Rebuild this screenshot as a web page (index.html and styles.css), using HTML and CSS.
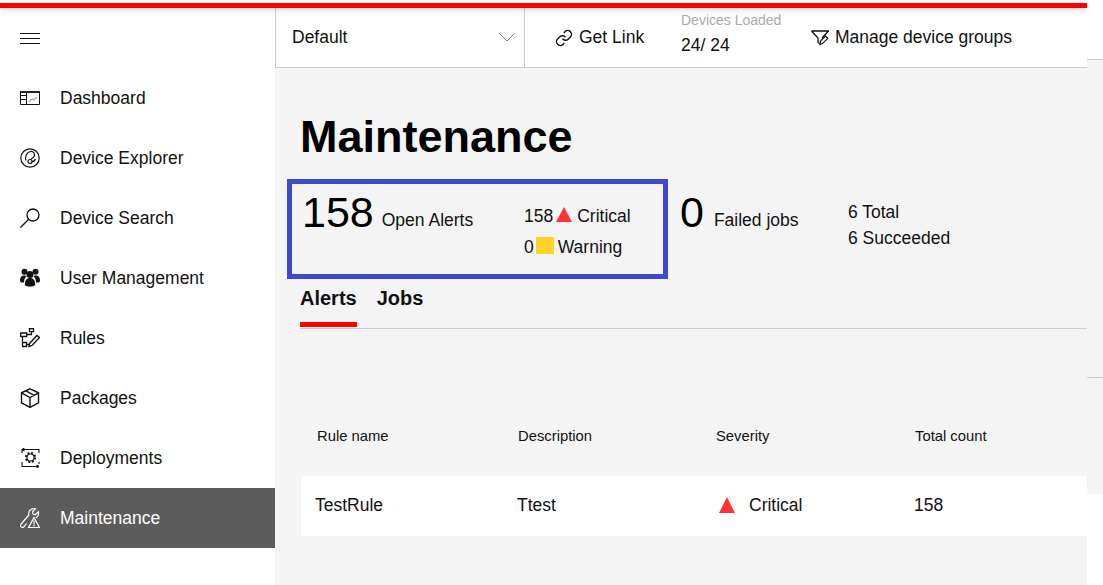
FILE: index.html
```html
<!DOCTYPE html>
<html>
<head>
    <title>Maintenance</title>
    <link rel="stylesheet" href="styles.css">
</head>
<body>
    <div class="redbar"></div>
    <div class="layout">
        <div class="sidebar">
            <div class="menu-btn">
                <svg width="20" height="12" viewBox="0 0 20 12"><path d="M0 1.5h20M0 6.5h20M0 11.5h20" stroke="#111" fill="none"/></svg>
            </div>
            <div class="nav-item">
                <svg class="nav-icon" viewBox="0 0 20 20"><path d="M.5 3.500h19v13H.5zM.5 7.500h6M6.500 5v11.500M.5 11.500h6" fill="none" stroke="#111"/><path d="M0 3h20v2H0z" fill="#222"/><path d="M9 14l3-3 2 1 3-3" fill="none" stroke="#aab" stroke-width="1.200"/></svg>
                <span>Dashboard</span>
            </div>
            <div class="nav-item">
                <svg class="nav-icon" viewBox="0 0 20 20"><g fill="none" stroke="#111" stroke-width="1.200"><circle cx="10" cy="10" r="9.200"/><path d="M6 12.500C4.500 8.500 7 4 10.500 3.500c3-.4 5 2.500 3.500 5-.8 1.300-2.200 1.800-3 2.800"/><circle cx="10" cy="13.500" r="2"/><path d="M12 13.500c1.500 0 3-1 3.500-2.500"/></g></svg>
                <span>Device Explorer</span>
            </div>
            <div class="nav-item">
                <svg class="nav-icon" viewBox="0 0 20 20"><circle cx="13" cy="7" r="6" fill="none" stroke="#111" stroke-width="1.300"/><path d="M8.700 11.300L.4 19.600" stroke="#111" stroke-width="1.300"/></svg>
                <span>Device Search</span>
            </div>
            <div class="nav-item">
                <svg class="nav-icon" viewBox="0 0 20 20"><g fill="#111"><circle cx="4.500" cy="3.800" r="3"/><circle cx="15.500" cy="3.800" r="3"/><circle cx="10" cy="6.500" r="3.500"/><path d="M0 13c0-4 1.500-5.500 4.500-5.500 1 0 1.500.2 2 .5C5 9.500 4 11.500 4 14.500H1zM20 13c0-4-1.500-5.500-4.500-5.500-1 0-1.500.2-2 .5 1.500 1.500 2.500 3.500 2.500 6.500h3z"/><path d="M4.800 17c0-5 2-7 5.200-7s5.200 2 5.200 7c-2 2-8.400 2-10.400 0z"/></g></svg>
                <span>User Management</span>
            </div>
            <div class="nav-item">
                <svg class="nav-icon" viewBox="0 0 20 20"><path d="M9.500.7h4v3h-4zM.7 5h6v3.500h-6zM2.500 8.500v5M2.500 14.500h4v4h-4zM6.700 6.500h4.800V3.700M6.500 16.500h3" fill="none" stroke="#111" stroke-width="1.300"/><path d="M9.500 15.500l7.500-8 2.500 2-7.500 8-3 1z" fill="none" stroke="#111" stroke-width="1.400"/></svg>
                <span>Rules</span>
            </div>
            <div class="nav-item">
                <svg class="nav-icon" viewBox="0 0 20 20"><path d="M10 .8l8.500 4v10L10 19.400l-8.500-4.600v-10zM1.500 4.800L10 9.500l8.500-4.700M10 9.500v9.900M5.800 2.800L14.200 7.300" fill="none" stroke="#111" stroke-width="1.400"/></svg>
                <span>Packages</span>
            </div>
            <div class="nav-item">
                <svg class="nav-icon" viewBox="0 0 20 20"><circle cx="10.500" cy="9.500" r="4.700" fill="none" stroke="#111" stroke-width="1.800" stroke-dasharray="2 1.700"/><circle cx="10.500" cy="9.500" r="3.500" fill="none" stroke="#111" stroke-width="1.100"/><path d="M2 5V1.500h17V5M2 14v4.500h17M2 1.500l2.500-1.500M2 1.500L4.500 3M19 18.500l-2.500-1.500M19 18.500L16.500 20M19 14v2" fill="none" stroke="#111" stroke-width="1.100"/></svg>
                <span>Deployments</span>
            </div>
            <div class="nav-item active">
                <svg class="nav-icon" viewBox="0 0 20 20"><path d="M.8 16.500L8.800 7C8 3.500 10.500.5 14.500.5l1 .3-3 3 .6 2.200 2.200.7 3-3c.6 2.500-.5 5-2.500 6M6.500 15.500l-2.800 3.500c-1.300 1.300-4 -.6-2.900-2.500" fill="none" stroke="#fff" stroke-width="1.200"/><path d="M14 9.500l5.500 10h-11z" fill="none" stroke="#fff" stroke-width="1.200"/><path d="M14 12.500v4M14 17v1.500" stroke="#fff" stroke-width="1.200"/></svg>
                <span>Maintenance</span>
            </div>
        </div>
        <div class="main">
            <div class="topbar">
                <div class="group-select">
                    <span>Default</span>
                    <svg width="16" height="9" viewBox="0 0 16 9"><path d="M.5.500L8 8 15.500.500" fill="none" stroke="#778"/></svg>
                </div>
                <div class="get-link">
                    <svg width="18" height="18" viewBox="0 0 24 24"><g fill="none" stroke="#111" stroke-width="1.900"><path d="M10 13a5 5 0 0 0 7.540.540l3-3a5 5 0 0 0-7.070-7.070l-1.720 1.710"/><path d="M14 11a5 5 0 0 0-7.540-.540l-3 3a5 5 0 0 0 7.070 7.070l1.710-1.710"/></g></svg>
                    <span>Get Link</span>
                </div>
                <div class="devices">
                    <div class="devices-label">Devices Loaded</div>
                    <div class="devices-count">24/ 24</div>
                </div>
                <div class="manage">
                    <svg width="18" height="16" viewBox="0 0 18 16"><path d="M.5 1h17l-6.500 7M.5 1L7 8v4.500l1.500 1" fill="none" stroke="#111" stroke-width="1.300"/><path d="M9 14.500l.5-3.500 5-5 2.300 2.300-5 5z" fill="none" stroke="#111" stroke-width="1.200"/></svg>
                    <span>Manage device groups</span>
                </div>
            </div>
            <div class="content">
                <h1>Maintenance</h1>
                <div class="summary">
                    <div class="alerts-box">
                        <div class="big-stat">
                            <span class="big-number">158</span>
                            <span class="big-label">Open Alerts</span>
                        </div>
                        <div class="stat-list">
                            <div class="stat-row">158 <span class="tri"></span> Critical</div>
                            <div class="stat-row">0 <span class="square"></span> Warning</div>
                        </div>
                    </div>
                    <div class="jobs-box">
                        <div class="big-stat">
                            <span class="big-number">0</span>
                            <span class="big-label">Failed jobs</span>
                        </div>
                        <div class="job-list">
                            <div>6 Total</div>
                            <div>6 Succeeded</div>
                        </div>
                    </div>
                </div>
                <div class="tabs">
                    <div class="tab selected">Alerts</div>
                    <div class="tab">Jobs</div>
                </div>
                <div class="table-head">
                    <div class="head-name">Rule name</div>
                    <div class="head-desc">Description</div>
                    <div class="head-sev">Severity</div>
                    <div>Total count</div>
                </div>
                <div class="table-row">
                    <div class="col-name">TestRule</div>
                    <div class="col-desc">Ttest</div>
                    <div class="col-sev"><span class="tri tri-tall"></span>Critical</div>
                    <div>158</div>
                </div>
            </div>
        </div>
        <div class="edge">
            <div class="edge-top"></div>
            <div class="edge-mid"></div>
            <div class="edge-low"></div>
        </div>
    </div>
</body>
</html>
```

FILE: styles.css
```css
html, body {
    height: 100%;
}

body {
    margin: 0;
    padding-top: 3px;
    box-sizing: border-box;
    background: white;
    font-family: "Liberation Sans", Arial, sans-serif;
    color: #111;
    overflow: hidden;
}

.redbar {
    position: relative;
    width: 1087px;
    height: 5px;
    background: #ff0000;
    box-shadow: 0 2px 4px rgba(0,0,0,0.15);
}

.layout {
    display: flex;
    height: 577px;
}

.sidebar {
    width: 275px;
    flex-shrink: 0;
    background: white;
}

.menu-btn {
    height: 60px;
    padding-left: 20px;
    display: flex;
    align-items: center;
}

.nav-item {
    height: 60px;
    padding-left: 20px;
    display: flex;
    align-items: center;
    font-size: 17.5px;
}

.nav-icon {
    width: 20px;
    height: 20px;
    margin-right: 20px;
}

.nav-item.active {
    background: #5c5c5c;
    color: white;
}

.main {
    width: 812px;
    flex-shrink: 0;
    background: #f4f4f4;
}

.topbar {
    height: 59px;
    display: flex;
    align-items: center;
    background: white;
    border-bottom: 1px solid #ccc;
    font-size: 17.5px;
}

.group-select {
    width: 250px;
    height: 100%;
    padding: 0 9px 0 16px;
    box-sizing: border-box;
    display: flex;
    align-items: center;
    justify-content: space-between;
    border-left: 1px solid #ccc;
    border-right: 1px solid #ccc;
}

.get-link {
    width: 156px;
    padding-left: 30px;
    box-sizing: border-box;
    display: flex;
    align-items: center;
    gap: 6px;
}

.devices {
    width: 130px;
    align-self: flex-start;
}

.devices-label {
    font-size: 14px;
    color: #aaa;
    margin-top: 4px;
}

.devices-count {
    margin-top: 7px;
}

.manage {
    display: flex;
    align-items: center;
    gap: 6px;
}

.content {
    padding-left: 25px;
}

h1 {
    margin: 0;
    padding-top: 41px;
    font-size: 45px;
    line-height: 55px;
    color: #000;
}

.summary {
    display: flex;
    margin: 15px 0 0 -13px;
}

.alerts-box {
    width: 381px;
    height: 100px;
    box-sizing: border-box;
    border: 5px solid #4048cc;
    display: flex;
    padding: 3px 0 0 10px;
}

.big-stat {
    width: 222px;
    display: flex;
    align-items: flex-start;
}

.big-number {
    font-size: 43px;
    line-height: 50px;
    color: #000;
}

.big-label {
    font-size: 17.5px;
    line-height: 20px;
    padding-top: 23px;
    margin-left: 8px;
}

.stat-list {
    font-size: 17.5px;
    padding-top: 14px;
}

.stat-row {
    height: 31px;
    display: flex;
    align-items: center;
    gap: 4px;
}

.tri {
    display: inline-block;
    width: 0;
    height: 0;
    border-left: 8px solid transparent;
    border-right: 8px solid transparent;
    border-bottom: 15px solid #ff3333;
    margin: 0 1px 4px -1px;
}

.square {
    display: inline-block;
    width: 18px;
    height: 17px;
    background: #ffd42a;
    margin: 0 0 4px -2px;
}

.jobs-box {
    display: flex;
    padding: 8px 0 0 12px;
}

.jobs-box .big-stat {
    width: 167px;
}

.jobs-box .big-label {
    margin-left: 10px;
}

.job-list {
    font-size: 17.5px;
    line-height: 26px;
    padding-top: 12px;
    margin-left: 1px;
}

.tabs {
    display: flex;
    gap: 20px;
    height: 50px;
    width: 787px;
    box-sizing: border-box;
    border-bottom: 1px solid #ccc;
    font-size: 20px;
    font-weight: bold;
}

.tab {
    padding-top: 8px;
    box-sizing: border-box;
    height: 48px;
}

.tab.selected {
    border-bottom: 5px solid #ff0000;
}

.table-head {
    display: flex;
    height: 147px;
    box-sizing: border-box;
    padding: 99px 0 0 17px;
    font-size: 14.8px;
}

.head-name {
    width: 201px;
}

.head-desc {
    width: 198px;
}

.head-sev {
    width: 199px;
}

.table-row {
    display: flex;
    align-items: center;
    height: 60px;
    box-sizing: border-box;
    margin-left: 1px;
    padding: 0 0 2px 14px;
    background: white;
    font-size: 17.5px;
}

.col-name {
    width: 202px;
}

.col-desc {
    width: 199px;
}

.col-sev {
    width: 198px;
    display: flex;
    align-items: center;
}

.tri-tall {
    border-bottom-width: 16px;
    margin: 0 14px 0 3px;
}

.edge {
    flex: 1;
    background: white;
}

.edge-top {
    height: 51px;
    border-bottom: 1px solid #ccc;
}

.edge-mid {
    height: 317px;
    background: #f4f4f4;
    border-bottom: 1px solid #ccc;
}

.edge-low {
    height: 116px;
    background: #f4f4f4;
}
```
